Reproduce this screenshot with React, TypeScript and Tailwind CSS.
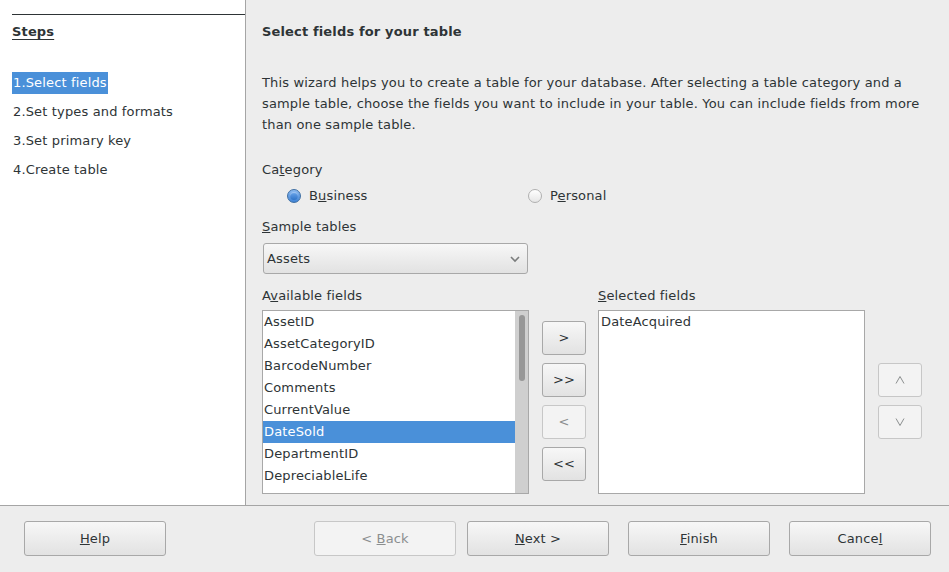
import React from 'react';

const FONT = "font-['DejaVu_Sans',sans-serif]";

const steps = ['Select fields', 'Set types and formats', 'Set primary key', 'Create table'];

const available = [
  'AssetID',
  'AssetCategoryID',
  'BarcodeNumber',
  'Comments',
  'CurrentValue',
  'DateSold',
  'DepartmentID',
  'DepreciableLife',
];

// GTK-ish push button
const Btn: React.FC<{ children: React.ReactNode; disabled?: boolean; className?: string }> = ({
  children,
  disabled,
  className = '',
}) => (
  <div
    className={`flex items-center justify-center rounded-[3px] border ${
      disabled
        ? 'border-[#c7c7c7] bg-[#f3f3f3] text-[#8b8e8f]'
        : 'border-[#a8a8a8] bg-gradient-to-b from-[#f7f7f7] to-[#e2e2e2] text-[#2e3436]'
    } ${className}`}
  >
    <span className="whitespace-pre">{children}</span>
  </div>
);

const Radio: React.FC<{ checked?: boolean }> = ({ checked }) =>
  checked ? (
    <span className="flex h-[14px] w-[14px] items-center justify-center rounded-full border border-[#3d6ea3] bg-gradient-to-b from-[#8cbaf0] to-[#3f84d6]">
      <span className="h-[8px] w-[8px] rounded-full bg-gradient-to-b from-[#6aa6ec] to-[#2f74c8] shadow-[inset_0_1px_1px_rgba(255,255,255,0.4)]" />
    </span>
  ) : (
    <span className="h-[14px] w-[14px] rounded-full border border-[#b0b0b0] bg-gradient-to-b from-[#ffffff] to-[#e6e6e6]" />
  );

const Chevron: React.FC<{ up?: boolean }> = ({ up }) => (
  <svg width="10" height="8" viewBox="0 0 10 8">
    <path
      d={up ? 'M1 7.5 L5 0.5 L9 7.5' : 'M1 0.5 L5 7.5 L9 0.5'}
      fill="none"
      stroke="#8b8e8f"
      strokeWidth="1"
    />
  </svg>
);

const App: React.FC = () => {
  return (
    <div
      className={`flex h-[572px] w-[949px] flex-col bg-[#ededed] text-[13px] tracking-[0.15px] text-[#2e3436] ${FONT}`}
    >
      <div className="flex h-[506px] border-b border-[#a5a5a5]">
        {/* Steps roadmap */}
        <div className="w-[246px] shrink-0 border-r border-[#a5a5a5] bg-white pl-[12px]">
          <div className="mt-[14px] h-[1px] bg-[#2e3436]" />
          <div className="mt-[8px] h-[18px] font-bold leading-[18px] underline underline-offset-[3px]">Steps</div>
          <div className="mt-[31px] flex flex-col gap-[7px]">
            {steps.map((s, i) => (
              <div key={s} className="flex h-[22px]">
                <span
                  className={`px-[1px] leading-[22px] ${i === 0 ? 'bg-[#4a90d9] text-white' : ''}`}
                >
                  {i + 1}.{s}
                </span>
              </div>
            ))}
          </div>
        </div>

        {/* Page content */}
        <div className="flex-1 pl-[16px]">
          <div className="mt-[23px] h-[18px] font-bold leading-[18px]">Select fields for your table</div>
          <p className="mt-[31px] w-[660px] leading-[21px]">
            This wizard helps you to create a table for your database. After selecting a table category and a
            sample table, choose the fields you want to include in your table. You can include fields from more
            than one sample table.
          </p>

          <div className="mt-[26px] h-[18px] leading-[18px]">
            Ca<u>t</u>egory
          </div>
          <div className="mt-[8px] flex h-[18px] items-center">
            <div className="ml-[25px] flex w-[241px] items-center gap-[8px]">
              <Radio checked />
              <span>
                B<u>u</u>siness
              </span>
            </div>
            <div className="flex items-center gap-[8px]">
              <Radio />
              <span>
                P<u>e</u>rsonal
              </span>
            </div>
          </div>

          <div className="mt-[13px] h-[18px] leading-[18px]">
            <u>S</u>ample tables
          </div>
          <div className="ml-[1px] mt-[7px] flex h-[31px] w-[265px] items-center justify-between rounded-[3px] border border-[#a8a8a8] bg-gradient-to-b from-[#f7f7f7] to-[#e2e2e2] pl-[3px] pr-[6px]">
            <span>Assets</span>
            <svg width="12" height="8" viewBox="0 0 12 8">
              <path d="M2 2 L6 6 L10 2" fill="none" stroke="#7a7c7c" strokeWidth="1.6" />
            </svg>
          </div>

          <div className="mt-[13px] flex">
            {/* Available fields */}
            <div className="flex w-[267px] flex-col">
              <div className="h-[18px] leading-[18px]">
                A<u>v</u>ailable fields
              </div>
              <div className="mt-[5px] flex h-[184px] border border-[#a8a8a8] bg-white">
                <div className="flex-1 overflow-hidden">
                  {available.map((f) => (
                    <div
                      key={f}
                      className={`h-[22px] pl-[1px] leading-[22px] ${f === 'DateSold' ? 'bg-[#4a90d9] text-white' : ''}`}
                    >
                      {f}
                    </div>
                  ))}
                </div>
                <div className="flex w-[13px] justify-center bg-[#cfcfcf] pt-[4px]">
                  <div className="h-[66px] w-[6px] rounded-full bg-[#979797]" />
                </div>
              </div>
            </div>

            {/* Move buttons */}
            <div className="ml-[13px] mt-[34px] flex flex-col gap-[8px]">
              <Btn className="h-[34px] w-[44px]">&gt;</Btn>
              <Btn className="h-[34px] w-[44px]">&gt;&gt;</Btn>
              <Btn disabled className="h-[34px] w-[44px]">&lt;</Btn>
              <Btn className="h-[34px] w-[44px]">&lt;&lt;</Btn>
            </div>

            {/* Selected fields */}
            <div className="ml-[12px] flex w-[267px] flex-col">
              <div className="h-[18px] leading-[18px]">
                <u>S</u>elected fields
              </div>
              <div className="mt-[5px] h-[184px] border border-[#a8a8a8] bg-white">
                <div className="h-[22px] pl-[2px] leading-[22px]">DateAcquired</div>
              </div>
            </div>

            <div className="ml-[13px] mt-[76px] flex flex-col gap-[8px]">
              <Btn disabled className="h-[34px] w-[44px]">
                <Chevron up />
              </Btn>
              <Btn disabled className="h-[34px] w-[44px]">
                <Chevron />
              </Btn>
            </div>
          </div>
        </div>
      </div>

      {/* Footer buttons */}
      <div className="flex pl-[24px] pt-[15px]">
        <Btn className="h-[35px] w-[142px]">
          <u>H</u>elp
        </Btn>
        <Btn disabled className="ml-[148px] h-[35px] w-[142px]">
          &lt; <u>B</u>ack
        </Btn>
        <Btn className="ml-[11px] h-[35px] w-[142px]">
          <u>N</u>ext &gt;
        </Btn>
        <Btn className="ml-[19px] h-[35px] w-[142px]">
          <u>F</u>inish
        </Btn>
        <Btn className="ml-[19px] h-[35px] w-[142px]">
          Cance<u>l</u>
        </Btn>
      </div>
    </div>
  );
};

export default App;
